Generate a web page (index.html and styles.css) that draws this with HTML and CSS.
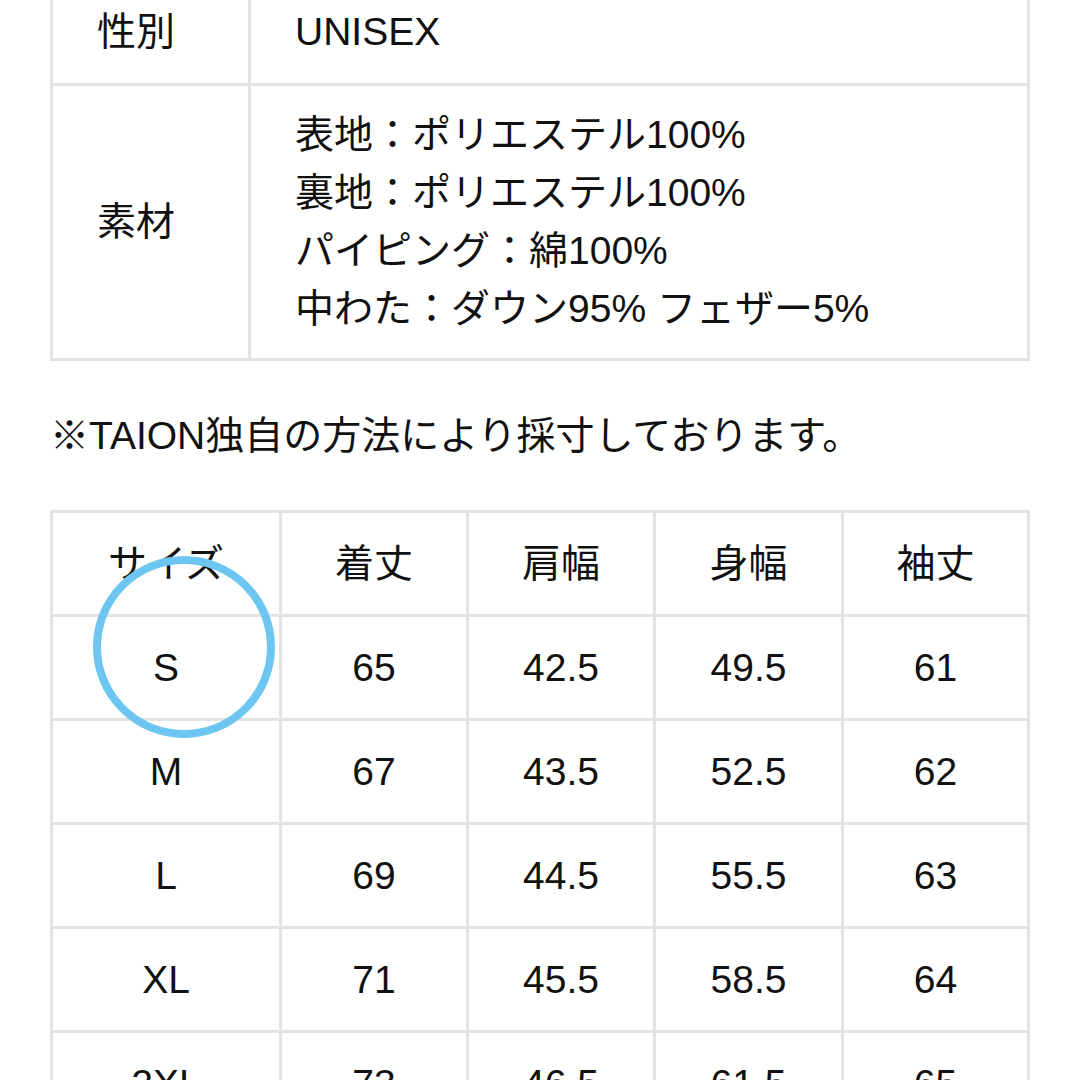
FILE: index.html
```html
<!DOCTYPE html>
<html lang="ja">
<head>
<meta charset="utf-8">
<link rel="stylesheet" href="styles.css">
</head>
<body>
<div class="page">
  <table class="spec">
    <colgroup><col class="spec-key"><col></colgroup>
    <tr class="spec-row1"><th>性別</th><td>UNISEX</td></tr>
    <tr class="spec-row2"><th>素材</th><td>表地：ポリエステル100%<br>裏地：ポリエステル100%<br>パイピング：綿100%<br>中わた：ダウン95% フェザー5%</td></tr>
  </table>
  <p class="note">※TAION独自の方法により採寸しております。</p>
  <div class="size-wrap">
    <table class="size">
      <colgroup><col class="c1"><col class="c2"><col class="c3"><col class="c4"><col class="c5"></colgroup>
      <tr><td>サイズ</td><td>着丈</td><td>肩幅</td><td>身幅</td><td>袖丈</td></tr>
      <tr><td>S</td><td>65</td><td>42.5</td><td>49.5</td><td>61</td></tr>
      <tr><td>M</td><td>67</td><td>43.5</td><td>52.5</td><td>62</td></tr>
      <tr><td>L</td><td>69</td><td>44.5</td><td>55.5</td><td>63</td></tr>
      <tr><td>XL</td><td>71</td><td>45.5</td><td>58.5</td><td>64</td></tr>
      <tr><td>2XL</td><td>73</td><td>46.5</td><td>61.5</td><td>65</td></tr>
    </table>
    <div class="mark"></div>
  </div>
</div>
</body>
</html>
```
FILE: styles.css
```css
html, body {
  margin: 0;
  padding: 0;
  background: #ffffff;
  overflow: hidden;
}
body {
  width: 1080px;
  height: 1080px;
  font-family: "Liberation Sans", "Noto Sans CJK JP", sans-serif;
  color: #111111;
  font-size: 39px;
}
.page {
  padding-left: 50px;
  margin-top: -22px;
}
table {
  border-collapse: collapse;
  width: 980px;
}
.spec th, .spec td {
  border: 3px solid #e3e3e3;
  text-align: left;
  font-weight: normal;
  vertical-align: middle;
  padding: 0 0 0 44px;
  line-height: 58px;
}
.spec-key { width: 198px; }
.spec-row1 th, .spec-row1 td { height: 102px; }
.spec-row2 th, .spec-row2 td { padding-top: 20px; padding-bottom: 20px; }
.note {
  margin: 46px 0 45px 0;
  line-height: 58px;
  font-size: 39px;
}
.size-wrap {
  position: relative;
}
.size td {
  border: 3px solid #e3e3e3;
  text-align: center;
  vertical-align: middle;
  height: 101px;
  padding: 0;
  line-height: 58px;
}
.c1 { width: 229px; }
.c2 { width: 187px; }
.c3 { width: 187px; }
.c4 { width: 188px; }
.c5 { width: 186px; }
.mark {
  position: absolute;
  left: 43px;
  top: 46px;
  width: 182px;
  height: 182px;
  box-sizing: border-box;
  border: 8px solid #6cc6f1;
  border-radius: 50%;
}
```
